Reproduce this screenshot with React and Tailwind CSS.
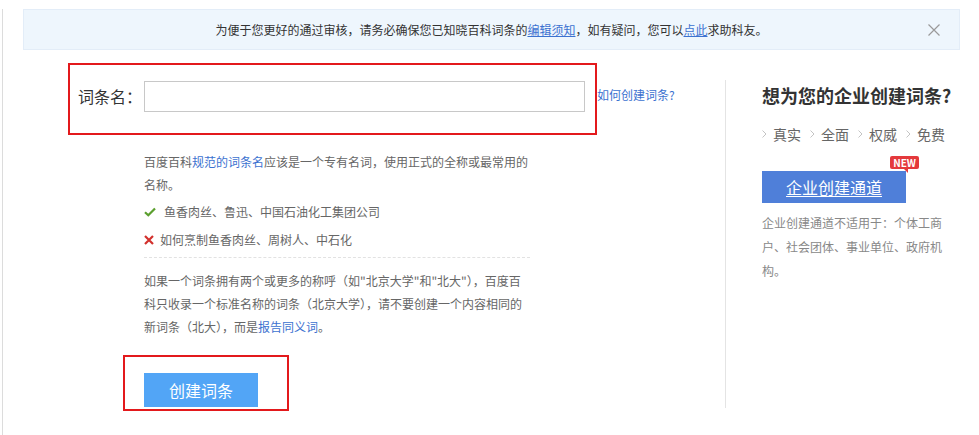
import React from "react";

function Check() {
    return (
        <svg width="12" height="10" viewBox="0 0 12 10" className="shrink-0">
            <path d="M1 5.2 L4.3 8.3 L11 1.5" fill="none" stroke="#5b9f2e" strokeWidth="2.2" />
        </svg>
    );
}

function Cross() {
    return (
        <svg width="10" height="10" viewBox="0 0 10 10" className="shrink-0">
            <path d="M1 1 L9 9 M9 1 L1 9" fill="none" stroke="#d2302c" strokeWidth="2.2" />
        </svg>
    );
}

function Arrow() {
    return (
        <svg width="5" height="8" viewBox="0 0 5 8" className="shrink-0">
            <path d="M0.5 0.5 L4 4 L0.5 7.5" fill="none" stroke="#c4c4c4" strokeWidth="1" />
        </svg>
    );
}

export default function App() {
    const features = ["真实", "全面", "权威", "免费"];

    return (
        <div className="w-[979px] h-[435px] overflow-hidden bg-white font-['Noto_Sans_CJK_SC',sans-serif]">
            <div className="ml-[2px] h-full border-l border-[#dcdcdc]">
                {/* notice banner */}
                <div className="relative ml-[20px] mt-[9px] w-[937px] h-[41px] bg-[#eef6fd] border border-[#e3edf8] flex items-center justify-center text-[12px] text-[#333]">
                    <span>
                        为便于您更好的通过审核，请务必确保您已知晓百科词条的
                        <a className="text-[#3c72d0] underline">编辑须知</a>
                        ，如有疑问，您可以
                        <a className="text-[#3c72d0] underline">点此</a>
                        求助科友。
                    </span>
                    <button className="absolute right-[19px] top-[14px]">
                        <svg width="12" height="12" viewBox="0 0 12 12">
                            <path d="M0.5 0.5 L11.5 11.5 M11.5 0.5 L0.5 11.5" stroke="#9a9a9a" strokeWidth="1.2" />
                        </svg>
                    </button>
                </div>

                <div className="flex mt-[13px]">
                    {/* left column */}
                    <div className="ml-[65px] w-[657px]">
                        <div className="relative h-[72px] flex items-start pt-[18px] pl-[10px]">
                            <span className="text-[16px] leading-[31px] text-[#333] w-[66px]">词条名：</span>
                            <input type="text" className="w-[441px] h-[31px] border border-[#c8c8c8] outline-none px-2 text-[14px]" />
                            <a className="ml-[12px] text-[12px] leading-[31px] text-[#3c72d0] -mt-[2px]">如何创建词条?</a>
                            <div className="pointer-events-none absolute left-0 top-0 w-[529px] h-[72px] border-2 border-[#e3191c]"></div>
                        </div>

                        <div className="ml-[76px] w-[386px] text-[12px] text-[#666]">
                            <p className="mt-[15px] leading-[23px]">
                                百度百科<a className="text-[#3c72d0]">规范的词条名</a>应该是一个专有名词，使用正式的全称或最常用的名称。
                            </p>
                            <div className="pt-[2px] pb-[3px] border-b border-dashed border-[#e2e2e2]">
                                <div className="flex items-center gap-[8px] h-[28px]">
                                    <Check />
                                    <span>鱼香肉丝、鲁迅、中国石油化工集团公司</span>
                                </div>
                                <div className="flex items-center gap-[6px] h-[28px]">
                                    <Cross />
                                    <span>如何烹制鱼香肉丝、周树人、中石化</span>
                                </div>
                            </div>
                            <p className="mt-[11px] leading-[23px]">
                                如果一个词条拥有两个或更多的称呼（如"北京大学"和"北大"），百度百科只收录一个标准名称的词条（北京大学），请不要创建一个内容相同的新词条（北大），而是<a className="text-[#3c72d0]">报告同义词</a>。
                            </p>
                            <div className="relative mt-[35px] w-[114px]">
                                <button className="w-[114px] h-[34px] bg-[#52a5f6] text-white text-[16px]">创建词条</button>
                                <div className="pointer-events-none absolute left-[-21px] top-[-18px] w-[166px] h-[56px] border-2 border-[#e3191c]"></div>
                            </div>
                        </div>
                    </div>

                    {/* right column */}
                    <div className="mt-[17px] h-[328px] border-l border-[#e4e4e4] pl-[36px]">
                        <h2 className="mt-[2px] text-[18px] leading-[26px] font-bold text-[#333]">想为您的企业创建词条?</h2>
                        <div className="mt-[16px] flex items-center gap-[9px] text-[14px] leading-[20px] text-[#666]">
                            {features.map((f) => (
                                <div key={f} className="flex items-center gap-[6px]">
                                    <Arrow />
                                    <span>{f}</span>
                                </div>
                            ))}
                        </div>
                        <div className="relative mt-[27px] w-[144px]">
                            <a className="flex items-center justify-center w-[144px] h-[32px] bg-[#4f7fd9] text-white text-[16px] underline underline-offset-2">企业创建通道</a>
                            <div className="absolute right-[-13px] top-[-15px]">
                                <div className="bg-[#e4393c] text-white text-[10px] leading-[13px] px-[3px] rounded-[2px] font-bold">NEW</div>
                                <div className="ml-[14px] w-0 h-0 border-t-[4px] border-t-[#e4393c] border-l-[4px] border-l-transparent"></div>
                            </div>
                        </div>
                        <p className="mt-[8px] w-[184px] text-[12px] leading-[24px] text-[#888]">
                            企业创建通道不适用于：个体工商户、社会团体、事业单位、政府机构。
                        </p>
                    </div>
                </div>
            </div>
        </div>
    );
}
